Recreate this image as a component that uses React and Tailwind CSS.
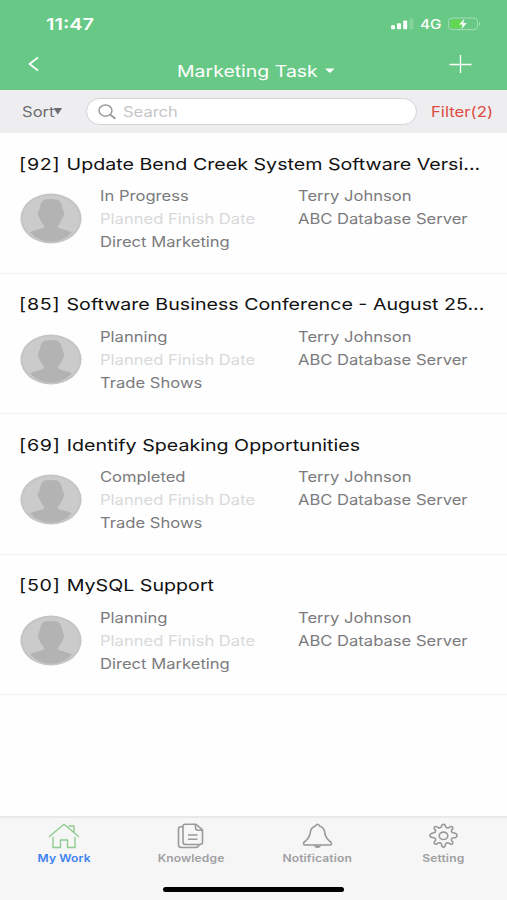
import React from 'react';

const tasks = [
  { id: 92, title: 'Update Bend Creek System Software Versi...', status: 'In Progress', category: 'Direct Marketing' },
  { id: 85, title: 'Software Business Conference - August 25...', status: 'Planning', category: 'Trade Shows' },
  { id: 69, title: 'Identify Speaking Opportunities', status: 'Completed', category: 'Trade Shows' },
  { id: 50, title: 'MySQL Support', status: 'Planning', category: 'Direct Marketing' },
];

// Wide lettering, anchored on the left edge
const Wide = ({ className = 'scale-x-[1.16]', children }) => (
  <span className={`inline-block origin-left whitespace-nowrap ${className}`}>{children}</span>
);

const StatusBar = () => (
  <div className="flex h-[48px] items-center pl-[46px] pr-[26px] text-white">
    <Wide className="scale-x-[1.21] text-[16.5px] font-semibold">11:47</Wide>
    <div className="ml-auto flex items-center">
      <svg width="23" height="12" viewBox="0 0 23 12" fill="currentColor">
        <rect x="0" y="7.2" width="4" height="4" rx="1" />
        <rect x="6" y="5.2" width="4" height="6" rx="1" />
        <rect x="12.2" y="2.4" width="4" height="8.8" rx="1" />
        <rect x="18.4" y="0.5" width="4" height="10.7" rx="1" opacity="0.2" />
      </svg>
      <div className="-mt-[2px] ml-[6px] w-[28px]">
        <Wide className="scale-x-[1.18] text-[13px] font-medium">4G</Wide>
      </div>
      <svg width="33" height="14" viewBox="0 0 33 14">
        <rect x="0.5" y="1" width="29" height="11.6" rx="3.5" fill="none" stroke="#a3dfb5" />
        <rect x="2.3" y="2.6" width="12" height="8.4" rx="2" fill="#62d852" />
        <path d="M31 5v3.6q1.5-.5 1.5-1.8T31 5z" fill="#a3dfb5" />
        <path d="M16.4 1.8 11 7.4h3.6l-1.3 4.600 5.600-6h-3.700z" fill="#fff" />
      </svg>
    </div>
  </div>
);

const Header = () => (
  <header className="h-[89.5px] shrink-0 bg-[#67c985]">
    <StatusBar />
    <div className="flex h-[41px] items-start text-white">
      <svg className="ml-[27px] mt-[8px]" width="13" height="16" viewBox="0 0 13 16" fill="none" stroke="currentColor" strokeWidth="1.7">
        <path d="M11 1.5 2.5 8l8.5 6.5" />
      </svg>
      <div className="ml-[137px] mt-[11px] w-[147px]">
        <Wide className="scale-x-[1.18] text-[16.5px] leading-[24px]">Marketing Task</Wide>
      </div>
      <svg className="mt-[20px]" width="12" height="6" viewBox="0 0 12 6" fill="currentColor">
        <path d="M1 .5h9.6L6.8 4.3q-1 .8-2 0z" />
      </svg>
      <svg className="ml-[113px] mt-[6px]" width="23" height="20" viewBox="0 0 23 20" stroke="currentColor" strokeWidth="1.3">
        <path d="M.5 10.5h22M11.5 1v18" />
      </svg>
    </div>
  </header>
);

const SearchBar = () => (
  <div className="flex h-[43.5px] shrink-0 items-center bg-[#eeeef0]">
    <div className="ml-[22px] w-[31px] text-[#6d6d70]">
      <Wide className="scale-x-[1.16] text-[14.3px]">Sort</Wide>
    </div>
    <svg width="10" height="7" viewBox="0 0 10 7" fill="#6d6d70">
      <path d="M.5 0h8.6L4.8 6.6z" />
    </svg>
    <div className="ml-[23px] flex h-[27px] w-[331px] items-center rounded-full border border-[#d2d2d4] bg-white text-[#c4c4c6]">
      <svg className="ml-[11px] mt-[2px]" width="19" height="16" viewBox="0 0 19 16" fill="none" stroke="#98989b" strokeWidth="1.4">
        <ellipse cx="7.5" cy="6.6" rx="6.5" ry="5.600" />
        <path d="m12 10.5 5.500 4.300" strokeWidth="1.8" />
      </svg>
      <Wide className="ml-[6px] scale-x-[1.18] text-[14px]">Search</Wide>
    </div>
    <Wide className="ml-[14px] scale-x-[1.17] text-[14.3px] text-[#e04b43]">Filter(2)</Wide>
  </div>
);

const Avatar = () => (
  <svg className="ml-[20px]" width="62" height="51" viewBox="0 0 62 51">
    <ellipse cx="31" cy="25.5" rx="30.6" ry="25" fill="#c4c4c4" />
    <ellipse cx="31" cy="25.5" rx="28.6" ry="23.3" fill="#cbcbcb" />
    <path
      d="M24 6.800Q31 5.200 38 6.800 41.500 9.500 42 14.500L44.500 21 41.500 27.500 37.500 33.500Q38 35.300 42 36 48 37 52 39.500 43 48.800 31 48.800T10 39.500Q14 37 20 36 24 35.300 24.500 33.500L20.500 27.500 17.500 21 20 14.500Q20.500 9.500 24 6.800z"
      fill="#b3b3b3"
    />
  </svg>
);

const TaskRow = ({ task }) => (
  <li className="h-[140.5px] border-b border-[#f1f1f2]">
    <h3 className="ml-[19px] pt-[18.5px] text-[16.5px] leading-[25px] text-[#111]">
      <Wide className="scale-x-[1.19]">
        <span className="tracking-[0.6px]">[{task.id}] </span>
        {task.title}
      </Wide>
    </h3>
    <div className="mt-[7.5px] flex items-center text-[14.3px] leading-[23px] text-[#7b7b7d]">
      <Avatar />
      <div className="ml-[18px] flex w-[198px] flex-col items-start">
        <Wide>{task.status}</Wide>
        <Wide className="scale-x-[1.16] text-[#d9d9da]">Planned Finish Date</Wide>
        <Wide>{task.category}</Wide>
      </div>
      <div className="flex h-[69px] flex-col items-start">
        <Wide>Terry Johnson</Wide>
        <Wide>ABC Database Server</Wide>
      </div>
    </div>
  </li>
);

const HomeIcon = () => (
  <svg width="32" height="26" viewBox="0 0 32 26" fill="none" stroke="#8fca90" strokeWidth="1.4" strokeLinejoin="round" strokeLinecap="round">
    <path d="M1.500 13.500 16 1.300l14.500 12.200M21 3h5v6.500M5 14.500v10h7.500v-7.500h7v7.500H27v-10" />
  </svg>
);

const KnowledgeIcon = () => (
  <svg width="27" height="26" viewBox="0 0 27 26" fill="none" stroke="#99999b" strokeWidth="1.6" strokeLinejoin="round">
    <path d="M8.500 1.300h10.500l6.500 5.500v12.500q0 2.200-2.500 2.200H8.500Q6 21.500 6 19.300V3.500q0-2.200 2.500-2.200z" />
    <path d="M18.500 1.500v3q0 2.700 2.800 2.700h4M6 3.800H4q-2.500 0-2.500 2.200v15.800Q1.500 24.500 4.500 24.500H19q2.500 0 3-2.800M11 12h9.500M11 16.200h9.500" />
  </svg>
);

const BellIcon = () => (
  <svg width="31" height="26" viewBox="0 0 31 26" fill="none" stroke="#99999b" strokeWidth="1.6" strokeLinejoin="round">
    <path d="M15.500 1.200q1.500 0 2.300 2.100 3.700 1 4.700 5 .8 6.200 4.500 9.200 2.800 1.800 2.500 3.500-.2 1-2 1h-24q-1.800 0-2-1-.3-1.700 2.500-3.500 3.700-3 4.500-9.200 1-4 4.700-5 .8-2.100 2.300-2.100z" />
    <path d="M11.800 22.500q1 2.500 3.700 2.500t3.700-2.500z" fill="#99999b" stroke="none" />
  </svg>
);

const GearIcon = () => (
  <svg width="29" height="26" viewBox="0 0 29 26" fill="none" stroke="#99999b" strokeWidth="1.6" strokeLinejoin="round">
    <path d="M12.500 3.500q.3-2.300 2-2.300t2 2.300q.3 1 1.500 1.300 1.200.3 2-.3 2-1.700 3.300-.6 1.300 1.200-.5 3-.7.800-.3 1.700.5 1.100 1.700 1.200 3.800.4 3.800 2.700t-3.800 2.300q-1.200.1-1.700 1.200-.4 1 .3 1.800 1.800 1.800.5 3-1.300 1.100-3.300-.6-.8-.6-2-.3t-1.500 1.300q-.3 3.100-2 3.100t-2-3.100q-.3-1-1.500-1.300t-2 .3q-2 1.700-3.300.6-1.300-1.200.5-3 .7-.8.300-1.800-.5-1.100-1.700-1.200-3.800-.1-3.800-2.300t3.800-2.700q1.200-.1 1.700-1.200.4-.9-.3-1.700-1.800-1.800-.5-3 1.300-1.100 3.300.6.800.6 2 .3t1.500-1.300z" />
    <ellipse cx="14.500" cy="12.800" rx="4.300" ry="3.700" />
  </svg>
);

const tabs = [
  { label: 'My Work', icon: HomeIcon, active: true },
  { label: 'Knowledge', icon: KnowledgeIcon },
  { label: 'Notification', icon: BellIcon },
  { label: 'Setting', icon: GearIcon },
];

const TabBar = () => (
  <nav className="flex h-[84px] shrink-0 flex-col items-center border-t-2 border-[#e9e9ea] bg-[#f6f6f7]">
    <div className="flex w-full pl-px">
      {tabs.map(({ label, icon: Icon, active }) => (
        <div key={label} className="flex flex-1 flex-col items-center pt-[5px]">
          <Icon />
          <span className={`mt-[2px] scale-x-[1.15] text-[10.5px] font-semibold leading-[15px] tracking-[0.1px] ${active ? 'text-[#3e82ee]' : 'text-[#a0a0a2]'}`}>
            {label}
          </span>
        </div>
      ))}
    </div>
    <div className="mt-[21px] h-[5px] w-[181px] rounded-full bg-black"></div>
  </nav>
);

const App = () => (
  <div className="flex h-[900px] w-[507px] flex-col overflow-hidden bg-[#fefefe] font-['Inter',sans-serif]">
    <Header />
    <SearchBar />
    <ul className="flex-1">
      {tasks.map((task) => (
        <TaskRow key={task.id} task={task} />
      ))}
    </ul>
    <TabBar />
  </div>
);

export default App;
